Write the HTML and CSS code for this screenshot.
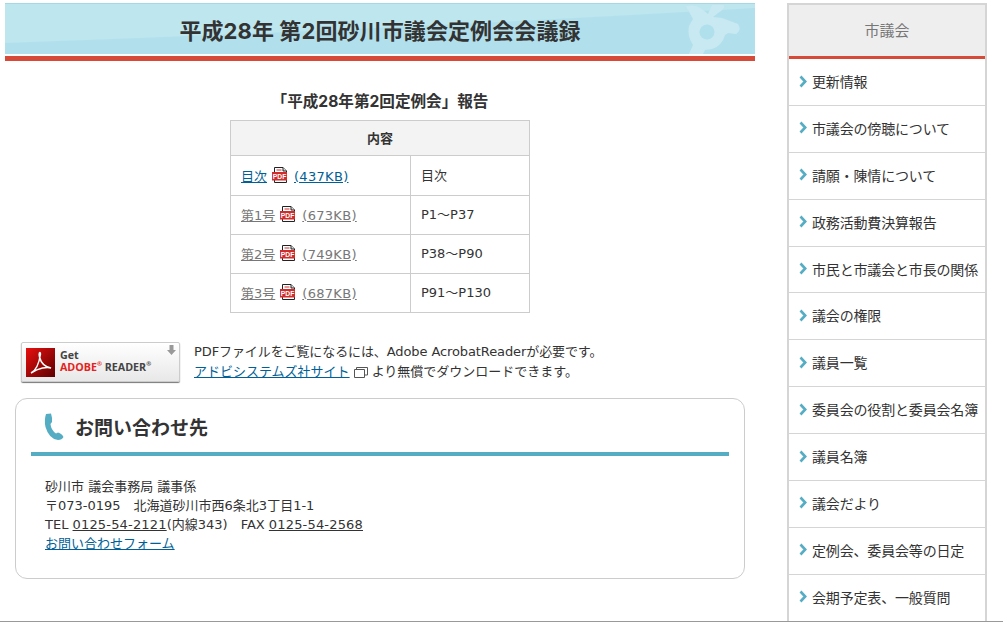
FILE: index.html
```html
<!DOCTYPE html>
<html lang="ja">
<head>
<meta charset="utf-8">
<title>平成28年 第2回砂川市議会定例会会議録</title>
<link rel="stylesheet" href="styles.css">
</head>
<body>
<svg class="defs" width="0" height="0" aria-hidden="true">
  <symbol id="pdf" viewBox="0 0 16 16">
    <path d="M2.500 .5H11L14.500 4V15.500H2.500Z" fill="#fff" stroke="#222"/>
    <path d="M11 .5V4H14.500" fill="#ddd" stroke="#222"/>
    <rect x="4.500" y="2.500" width="5" height="1" fill="#c33"/>
    <rect x="0" y="5" width="15" height="8.500" fill="#d02c2c"/>
    <text class="pdf-label" x="7.500" y="12.200" text-anchor="middle" textLength="13.500" lengthAdjust="spacingAndGlyphs">PDF</text>
  </symbol>
  <symbol id="chev" viewBox="0 0 8 13">
    <path d="M1.500 1.500L6.200 6.500L1.500 11.500" fill="none" stroke="#55adc4" stroke-width="2.600"/>
  </symbol>
</svg>
<div class="page">
  <main class="main">
    <header class="banner">
      <svg class="banner-swoosh" viewBox="0 0 750 50" preserveAspectRatio="none" aria-hidden="true">
        <path d="M0 39Q375 26 750 4V0H0Z" fill="#bde6ef"/>
      </svg>
      <svg class="banner-mark" viewBox="0 0 62 52" aria-hidden="true">
        <path d="M4 2Q14 0 20 5L26 10L30 1H42Q43 5 36 9L31 13L40 14L56 20Q60 26 54 30L46 29L43 31Q40 42 30 45L23 46L21 50H7L11 41Q5 32 7 22L11 15Z" fill="#c8e9f2"/>
        <circle cx="25" cy="28" r="7.500" fill="#b0e0ec"/>
      </svg>
      <h1 class="banner-title">平成28年 第2回砂川市議会定例会会議録</h1>
    </header>

    <h2 class="report-title">「平成28年第2回定例会」報告</h2>
    <table class="report">
      <colgroup><col class="col-file"><col class="col-range"></colgroup>
      <thead><tr><th colspan="2">内容</th></tr></thead>
      <tbody>
        <tr class="row-first">
          <td class="c1"><a href="#" class="link">目次</a><svg class="pdf"><use href="#pdf"/></svg><a href="#" class="link size">(437KB)</a></td>
          <td class="c2">目次</td>
        </tr>
        <tr>
          <td class="c1"><a href="#" class="visited">第1号</a><svg class="pdf"><use href="#pdf"/></svg><a href="#" class="visited size">(673KB)</a></td>
          <td class="c2">P1～P37</td>
        </tr>
        <tr>
          <td class="c1"><a href="#" class="visited">第2号</a><svg class="pdf"><use href="#pdf"/></svg><a href="#" class="visited size">(749KB)</a></td>
          <td class="c2">P38～P90</td>
        </tr>
        <tr>
          <td class="c1"><a href="#" class="visited">第3号</a><svg class="pdf"><use href="#pdf"/></svg><a href="#" class="visited size">(687KB)</a></td>
          <td class="c2">P91～P130</td>
        </tr>
      </tbody>
    </table>

    <section class="reader">
      <a href="#" class="reader-badge">
        <svg class="reader-logo" viewBox="0 0 29 29" aria-hidden="true">
          <defs><linearGradient id="adobe" x1="0" y1="0" x2="1" y2="1"><stop offset="0" stop-color="#e8100f"/><stop offset="1" stop-color="#5d0000"/></linearGradient></defs>
          <rect width="29" height="29" fill="url(#adobe)"/>
          <path d="M5 25C9 23 13 16 14.500 6C14 3 12.500 5 13.500 9C15 15 19 19 25 20C21 18.500 13 20 5 25Z" fill="none" stroke="#fff" stroke-width="1.500"/>
        </svg>
        <span class="reader-text">
          <span class="reader-get">Get</span>
          <span class="reader-name"><span class="reader-adobe">ADOBE<sup>®</sup></span> READER<sup>®</sup></span>
        </span>
        <svg class="reader-arrow" viewBox="0 0 9 11" aria-hidden="true"><path d="M2.500 0H6.500V5H9L4.500 10L0 5H2.500Z" fill="#999"/></svg>
      </a>
      <div class="reader-copy">
        <p class="reader-lead">PDFファイルをご覧になるには、Adobe AcrobatReaderが必要です。</p>
        <p><a href="#" class="link">アドビシステムズ社サイト</a><svg class="ext" viewBox="0 0 14 11" aria-hidden="true"><path d="M.5 2.500H10.500V10.500H.5ZM2.500 2.500V.5H13.500V8H10.500" fill="none" stroke="#555"/></svg>より無償でダウンロードできます。</p>
      </div>
    </section>

    <section class="contact">
      <h2 class="contact-title">
        <svg class="phone" viewBox="0 0 20 28" aria-hidden="true"><path d="M2 1L7 .5Q8.500 5 8 9L6.500 11Q7 17 12 20.500L14 19.500Q18 20.500 19.500 24Q18 27 14 27Q5 26 1.500 14Q0 7 2 1Z" fill="#55adc4"/></svg>
        お問い合わせ先
      </h2>
      <div class="contact-body">
        <p>砂川市 議会事務局 議事係</p>
        <p>〒073-0195　北海道砂川市西6条北3丁目1-1</p>
        <p>TEL <a href="#" class="tel">0125-54-2121</a>(内線343)　FAX <a href="#" class="tel">0125-54-2568</a></p>
        <p><a href="#" class="link">お問い合わせフォーム</a></p>
      </div>
    </section>
  </main>

  <nav class="side">
    <h2 class="side-title">市議会</h2>
    <ul class="side-list">
      <li><a href="#"><svg class="chev"><use href="#chev"/></svg>更新情報</a></li>
      <li><a href="#"><svg class="chev"><use href="#chev"/></svg>市議会の傍聴について</a></li>
      <li><a href="#"><svg class="chev"><use href="#chev"/></svg>請願・陳情について</a></li>
      <li><a href="#"><svg class="chev"><use href="#chev"/></svg>政務活動費決算報告</a></li>
      <li><a href="#"><svg class="chev"><use href="#chev"/></svg>市民と市議会と市長の関係</a></li>
      <li><a href="#"><svg class="chev"><use href="#chev"/></svg>議会の権限</a></li>
      <li><a href="#"><svg class="chev"><use href="#chev"/></svg>議員一覧</a></li>
      <li><a href="#"><svg class="chev"><use href="#chev"/></svg>委員会の役割と委員会名簿</a></li>
      <li><a href="#"><svg class="chev"><use href="#chev"/></svg>議員名簿</a></li>
      <li><a href="#"><svg class="chev"><use href="#chev"/></svg>議会だより</a></li>
      <li><a href="#"><svg class="chev"><use href="#chev"/></svg>定例会、委員会等の日定</a></li>
      <li><a href="#"><svg class="chev"><use href="#chev"/></svg>会期予定表、一般質問</a></li>
    </ul>
  </nav>
</div>
<div class="window-edge"></div>
</body>
</html>
```

FILE: styles.css
```css
* { box-sizing: border-box; }
html, body { margin: 0; height: 622px; overflow: hidden; background: #fff; }
body {
  font-family: "DejaVu Sans", "Noto Sans CJK JP", sans-serif;
  font-size: 13px;
  color: #333;
}
p, h1, h2, ul { margin: 0; padding: 0; }
.defs { display: none; }

.page { display: flex; align-items: flex-start; height: 622px; overflow: hidden; padding: 3px 0 0 5px; }
.main { width: 750px; flex: none; }
.side { width: 200px; flex: none; margin-left: 32px; border: 2px solid #d5d5d5; border-bottom: 0; height: 680px; }

.banner {
  position: relative;
  height: 58px;
  background: #b1e0ec;
  border-top: 1px solid #a5d8e4;
  border-bottom: 5px solid #d74a3a;
  box-shadow: inset 0 -2px 0 #fff;
}
.banner-title {
  position: relative;
  text-align: center;
  font-family: "Inter", "Noto Sans CJK JP", sans-serif;
  font-size: 22px;
  letter-spacing: .1px;
  font-weight: 700;
  line-height: 52px;
  padding-top: 1px;
  height: 52px;
  color: #333;
}
.banner-swoosh { position: absolute; left: 0; top: 0; width: 750px; height: 50px; }
.banner-mark { position: absolute; left: 677px; top: 0; width: 62px; height: 52px; }

.report-title {
  margin-top: 31px;
  text-align: center;
  font-family: "Inter", "Noto Sans CJK JP", sans-serif;
  font-size: 15.600px;
  line-height: 20px;
  font-weight: 700;
  color: #333;
}
.report {
  margin: 8px auto 0;
  width: 299px;
  border-collapse: collapse;
  table-layout: fixed;
}
.col-file { width: 180px; }
.col-range { width: 119px; }
.report th, .report td { border: 1px solid #ccc; padding: 0 10px; }
.report th { height: 35px; padding-bottom: 2px; background: #f3f3f3; font-family: "Noto Sans CJK JP", sans-serif; font-size: 13px; font-weight: 700; text-align: center; }
.report td { height: 39px; }
.report .c1 { padding-bottom: 2px; white-space: nowrap; }
.report .c2 { padding-bottom: 4px; }
.report .row-first td { height: 40px; }
.report .row-first .c1 { padding-bottom: 0; }
.report .row-first .c2 { padding-bottom: 2px; }
.link { color: #005f96; text-decoration: underline; }
.visited { color: #777; text-decoration: underline; }
.size { letter-spacing: .3px; }
.pdf { width: 16px; height: 16px; margin: 0 6px 0 5px; vertical-align: -2px; }
.pdf-label { font-family: "Liberation Sans", sans-serif; font-size: 8px; font-weight: 700; fill: #fff; }

.reader { display: flex; margin: 29px 0 0 16px; }
.reader-badge {
  position: relative;
  display: flex;
  align-items: center;
  width: 159px;
  height: 40px;
  padding-left: 4px;
  border: 1px solid #ccc;
  border-radius: 2px;
  background: linear-gradient(#fff, #e8e8e8);
  box-shadow: 0 1px 1px #777;
  text-decoration: none;
  color: #444;
}
.reader-logo { width: 29px; height: 29px; flex: none; }
.reader-text { display: flex; flex-direction: column; margin: -2px 0 0 5px; font-family: "Open Sans", sans-serif; font-size: 10.700px; line-height: 12px; font-weight: 700; white-space: nowrap; }
.reader-adobe { color: #e42320; }
.reader-text sup { font-size: 6px; line-height: 0; }
.reader-arrow { position: absolute; right: 3px; top: 2px; width: 9px; height: 11px; }
.reader-copy { margin-left: 14px; line-height: 19px; white-space: nowrap; }
.reader-lead { margin-bottom: 1px; letter-spacing: -.1px; }
.ext { width: 14px; height: 11px; margin: 0 4px 0 4px; vertical-align: -2px; }

.contact {
  margin: 16px 10px 0;
  height: 181px;
  padding: 0 15px;
  border: 1px solid #ccc;
  border-radius: 12px;
}
.contact-title {
  display: flex;
  align-items: center;
  height: 57px;
  padding: 2px 0 0 13px;
  gap: 11px;
  border-bottom: 4px solid #55adc4;
  font-family: "Noto Sans CJK JP", sans-serif;
  font-size: 19px;
  font-weight: 700;
  color: #333;
}
.phone { width: 20px; height: 28px; flex: none; }
.contact-body { padding: 21px 0 0 14px; line-height: 19px; }
.tel { color: #333; text-decoration: underline; letter-spacing: .17px; }

.side-title {
  height: 54px;
  background: #eee;
  border-bottom: 3px solid #d74a3a;
  text-align: center;
  font-size: 15px;
  font-weight: 400;
  line-height: 53px;
  color: #777;
}
.side-list { list-style: none; }
.side-list li { height: 46.880px; border-bottom: 1px solid #d5d5d5; }
.side-list a { display: flex; align-items: center; height: 46px; padding: 0 0 2px 10px; font-size: 14px; letter-spacing: -.17px; color: #333; text-decoration: none; white-space: nowrap; }
.chev { width: 8px; height: 13px; margin-right: 5px; flex: none; }

.window-edge { position: fixed; left: 0; right: 0; bottom: 0; height: 1px; background: #999; }
```
